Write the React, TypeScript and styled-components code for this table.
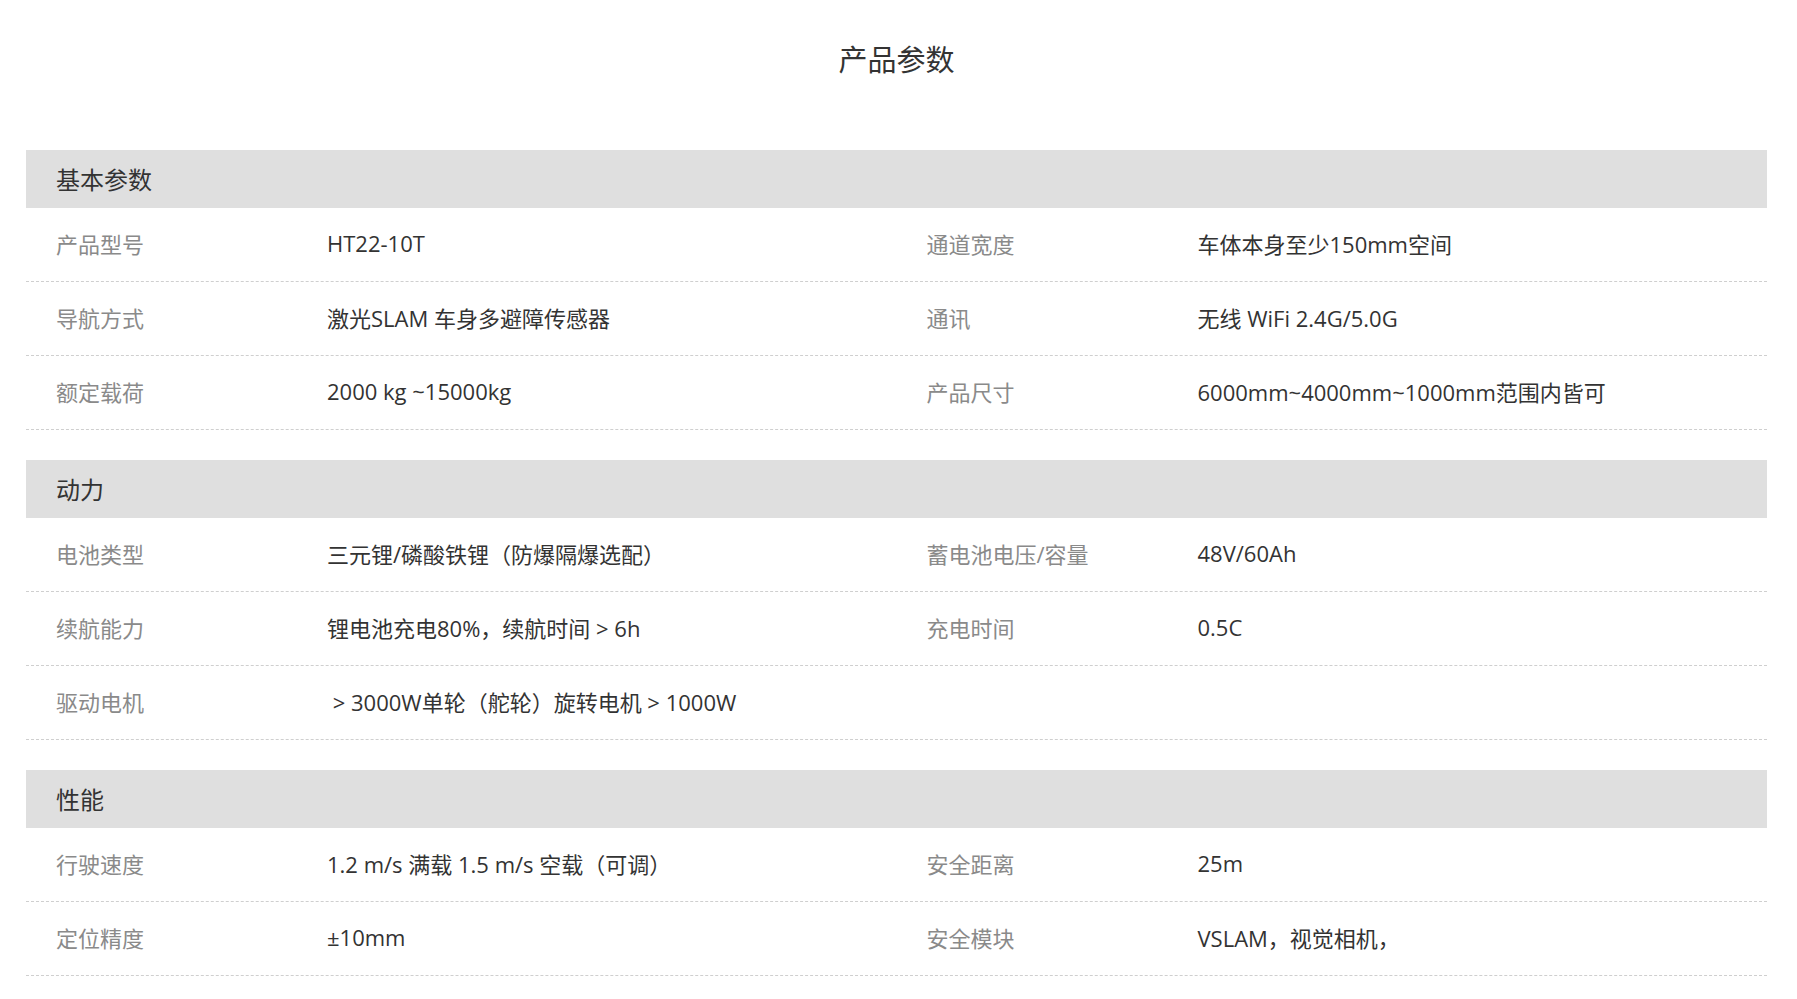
import styled, { createGlobalStyle } from "styled-components";

type Spec = [string, string];

const sections: { title: string; rows: Spec[][] }[] = [
  {
    title: "基本参数",
    rows: [
      [
        ["产品型号", "HT22-10T"],
        ["通道宽度", "车体本身至少150mm空间"],
      ],
      [
        ["导航方式", "激光SLAM 车身多避障传感器"],
        ["通讯", "无线 WiFi 2.4G/5.0G"],
      ],
      [
        ["额定载荷", "2000 kg ~15000kg"],
        ["产品尺寸", "6000mm~4000mm~1000mm范围内皆可"],
      ],
    ],
  },
  {
    title: "动力",
    rows: [
      [
        ["电池类型", "三元锂/磷酸铁锂（防爆隔爆选配）"],
        ["蓄电池电压/容量", "48V/60Ah"],
      ],
      [
        ["续航能力", "锂电池充电80%，续航时间 > 6h"],
        ["充电时间", "0.5C"],
      ],
      [["驱动电机", " > 3000W单轮（舵轮）旋转电机 > 1000W"]],
    ],
  },
  {
    title: "性能",
    rows: [
      [
        ["行驶速度", "1.2 m/s 满载 1.5 m/s 空载（可调）"],
        ["安全距离", "25m"],
      ],
      [
        ["定位精度", "±10mm"],
        ["安全模块", "VSLAM，视觉相机，"],
      ],
    ],
  },
];

const GlobalStyle = createGlobalStyle`
  body {
    margin: 0;
    background: #fff;
    font-family: "Open Sans", "Noto Sans CJK SC", sans-serif;
  }
`;

const App = () => {
  return (
    <>
      <GlobalStyle />
      <Page>
        <Title>产品参数</Title>
        {sections.map((section) => (
          <Section key={section.title}>
            <SectionHead>{section.title}</SectionHead>
            {section.rows.map((row, i) => (
              <Row key={i}>
                {row.map(([label, value]) => (
                  <Pair key={label}>
                    <Label>{label}</Label>
                    <Value>{value}</Value>
                  </Pair>
                ))}
              </Row>
            ))}
          </Section>
        ))}
      </Page>
    </>
  );
};

const Page = styled.div`
  margin: 0 30px 0 26px;
  padding-bottom: 24px;
`;

const Title = styled.h2`
  margin: 0 0 70px;
  padding-top: 40px;
  font-size: 29px;
  line-height: 40px;
  font-weight: 400;
  color: #333;
  text-align: center;
`;

const Section = styled.section`
  margin-bottom: 30px;
`;

const SectionHead = styled.div`
  height: 58px;
  box-sizing: border-box;
  padding: 0 0 2px 30px;
  display: flex;
  align-items: center;
  background: #dfdfdf;
  font-size: 24px;
  color: #333;
`;

const Row = styled.div`
  display: grid;
  grid-template-columns: 1fr 1fr;
  height: 74px;
  box-sizing: border-box;
  padding-bottom: 3px;
  border-bottom: 1px dashed #cfcfcf;
`;

const Pair = styled.div`
  display: grid;
  grid-template-columns: 270px 1fr;
  align-items: center;
  font-size: 22px;
  white-space: pre;
`;

const Label = styled.span`
  padding-left: 30px;
  color: #8a8a8a;
`;

const Value = styled.span`
  padding-left: 31px;
  color: #333;
`;

export default App;
